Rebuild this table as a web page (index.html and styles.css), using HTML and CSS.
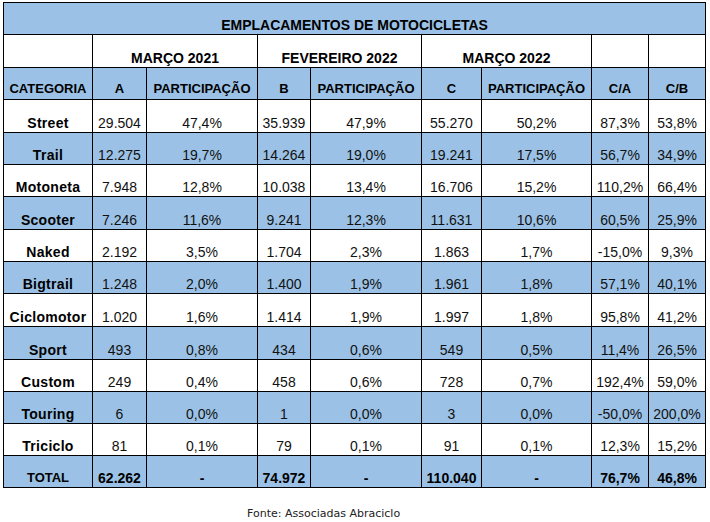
FILE: index.html
```html
<!DOCTYPE html>
<html lang="pt-BR">
<head>
<meta charset="utf-8">
<title>Emplacamentos de Motocicletas</title>
<link rel="stylesheet" href="styles.css">
</head>
<body>
<div class="page">
  <table class="report">
    <colgroup>
      <col class="c-cat"><col class="c-a"><col class="c-pa"><col class="c-b"><col class="c-pb"><col class="c-c"><col class="c-pc"><col class="c-ca"><col class="c-cb">
    </colgroup>
    <tbody>
      <tr class="blue h32 title-row"><td colspan="9">EMPLACAMENTOS DE MOTOCICLETAS</td></tr>
      <tr class="h33 period-row"><td></td><td colspan="2">MARÇO 2021</td><td colspan="2">FEVEREIRO 2022</td><td colspan="2">MARÇO 2022</td><td></td><td></td></tr>
      <tr class="blue h32 head-row"><td>CATEGORIA</td><td>A</td><td>PARTICIPAÇÃO</td><td>B</td><td>PARTICIPAÇÃO</td><td>C</td><td>PARTICIPAÇÃO</td><td>C/A</td><td>C/B</td></tr>
      <tr class="h33"><td class="cat">Street</td><td>29.504</td><td>47,4%</td><td>35.939</td><td>47,9%</td><td>55.270</td><td>50,2%</td><td>87,3%</td><td>53,8%</td></tr>
      <tr class="blue h32"><td class="cat">Trail</td><td>12.275</td><td>19,7%</td><td>14.264</td><td>19,0%</td><td>19.241</td><td>17,5%</td><td>56,7%</td><td>34,9%</td></tr>
      <tr class="h32"><td class="cat">Motoneta</td><td>7.948</td><td>12,8%</td><td>10.038</td><td>13,4%</td><td>16.706</td><td>15,2%</td><td>110,2%</td><td>66,4%</td></tr>
      <tr class="blue h33"><td class="cat">Scooter</td><td>7.246</td><td>11,6%</td><td>9.241</td><td>12,3%</td><td>11.631</td><td>10,6%</td><td>60,5%</td><td>25,9%</td></tr>
      <tr class="h32"><td class="cat">Naked</td><td>2.192</td><td>3,5%</td><td>1.704</td><td>2,3%</td><td>1.863</td><td>1,7%</td><td>-15,0%</td><td>9,3%</td></tr>
      <tr class="blue h32"><td class="cat">Bigtrail</td><td>1.248</td><td>2,0%</td><td>1.400</td><td>1,9%</td><td>1.961</td><td>1,8%</td><td>57,1%</td><td>40,1%</td></tr>
      <tr class="h33"><td class="cat">Ciclomotor</td><td>1.020</td><td>1,6%</td><td>1.414</td><td>1,9%</td><td>1.997</td><td>1,8%</td><td>95,8%</td><td>41,2%</td></tr>
      <tr class="blue h33"><td class="cat">Sport</td><td>493</td><td>0,8%</td><td>434</td><td>0,6%</td><td>549</td><td>0,5%</td><td>11,4%</td><td>26,5%</td></tr>
      <tr class="h32"><td class="cat">Custom</td><td>249</td><td>0,4%</td><td>458</td><td>0,6%</td><td>728</td><td>0,7%</td><td>192,4%</td><td>59,0%</td></tr>
      <tr class="blue h32"><td class="cat">Touring</td><td>6</td><td>0,0%</td><td>1</td><td>0,0%</td><td>3</td><td>0,0%</td><td>-50,0%</td><td>200,0%</td></tr>
      <tr class="h32"><td class="cat">Triciclo</td><td>81</td><td>0,1%</td><td>79</td><td>0,1%</td><td>91</td><td>0,1%</td><td>12,3%</td><td>15,2%</td></tr>
      <tr class="blue h32 total-row"><td class="total-label">TOTAL</td><td>62.262</td><td>-</td><td>74.972</td><td>-</td><td>110.040</td><td>-</td><td>76,7%</td><td>46,8%</td></tr>
    </tbody>
  </table>
  <p class="source">Fonte: Associadas Abraciclo</p>
</div>
</body>
</html>
```

FILE: styles.css
```css
html, body {
  margin: 0;
  padding: 0;
  background: #ffffff;
}

.page {
  padding: 2px 0 0 3px;
}

.report {
  border-collapse: collapse;
  table-layout: fixed;
  width: 703px;
  font-family: "Liberation Sans", Arial, sans-serif;
  font-size: 14px;
  color: #111111;
}

.c-cat { width: 89px; }
.c-a { width: 54px; }
.c-pa { width: 111px; }
.c-b { width: 53px; }
.c-pb { width: 111px; }
.c-c { width: 60px; }
.c-pc { width: 110px; }
.c-ca { width: 57px; }
.c-cb { width: 57px; }

.report td {
  border: 1px solid #000000;
  padding: 0 1px 1px;
  line-height: 16px;
  text-align: center;
  vertical-align: bottom;
  white-space: nowrap;
  overflow: visible;
}

.h32 { height: 32px; }
.h33 { height: 33px; }

.blue td { background: #9bc2e6; }

.title-row td,
.period-row td,
.head-row td,
.total-row td,
.report td.cat {
  font-weight: bold;
  color: #000000;
}

.head-row td {
  font-size: 13px;
  padding-bottom: 2px;
}

.report td.cat {
  letter-spacing: 0.3px;
}

.report td.total-label {
  font-size: 13px;
}

.source {
  margin: 19px 0 0 244px;
  font-family: "DejaVu Sans", Verdana, sans-serif;
  font-size: 11px;
  line-height: 13px;
  color: #222222;
}
```
